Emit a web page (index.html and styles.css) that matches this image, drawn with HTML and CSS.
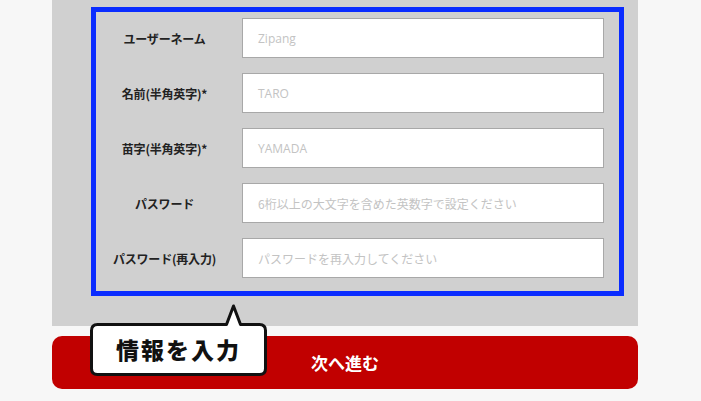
FILE: index.html
```html
<!DOCTYPE html>
<html lang="ja">
<head>
<meta charset="utf-8">
<title>会員登録</title>
<link rel="stylesheet" href="styles.css">
</head>
<body>
<div class="page">
  <section class="panel">
    <div class="frame">
      <div class="form-grid">
        <div class="label">ユーザーネーム</div>
        <div class="field"><span class="ph ph-latin">Zipang</span></div>
        <div class="label">名前(半角英字)*</div>
        <div class="field"><span class="ph ph-latin">TARO</span></div>
        <div class="label">苗字(半角英字)*</div>
        <div class="field"><span class="ph ph-latin">YAMADA</span></div>
        <div class="label">パスワード</div>
        <div class="field"><span class="ph">6桁以上の大文字を含めた英数字で設定ください</span></div>
        <div class="label">パスワード(再入力)</div>
        <div class="field"><span class="ph">パスワードを再入力してください</span></div>
      </div>
    </div>
  </section>
  <button class="next-btn" type="button">次へ進む</button>
  <div class="callout">
    <svg class="callout-shape" width="181" height="77" viewBox="0 0 181 77" aria-hidden="true">
      <path d="M9.5 23.5 H138.5 L145.5 5 L152.5 23.5 H171.5 Q177.5 23.5 177.5 29.5 V67.5 Q177.5 73.5 171.5 73.5 H9.5 Q3.5 73.5 3.5 67.5 V29.5 Q3.5 23.5 9.5 23.5 Z" fill="#ffffff" stroke="#111111" stroke-width="3" stroke-linejoin="round"/>
    </svg>
    <span class="callout-text">情報を入力</span>
  </div>
</div>
</body>
</html>
```
FILE: styles.css
```css
html, body {
  margin: 0;
  padding: 0;
}
body {
  background: #f7f7f7;
  font-family: "Noto Sans CJK JP", "Noto Sans", sans-serif;
  width: 701px;
  height: 401px;
  overflow: hidden;
}
.page {
  position: relative;
  width: 701px;
  height: 401px;
}
.panel {
  margin-left: 52px;
  width: 586px;
  height: 326px;
  background: #d0d0d0;
  padding: 7px 0 0 39px;
  box-sizing: border-box;
}
.frame {
  width: 533px;
  height: 289px;
  box-sizing: border-box;
  border: 5px solid #0a2cff;
  padding: 6px 15px 0 0;
}
.form-grid {
  display: grid;
  grid-template-columns: 137px 362px;
  grid-auto-rows: 40px;
  column-gap: 9px;
  row-gap: 15px;
}
.label {
  display: flex;
  align-items: center;
  justify-content: center;
  font-size: 12px;
  font-weight: 700;
  color: #222;
  white-space: nowrap;
  letter-spacing: -0.2px;
}
.field {
  background: #fff;
  border: 1px solid #a8a8a8;
  display: flex;
  align-items: center;
  padding-left: 15px;
  box-sizing: border-box;
}
.ph {
  font-size: 12px;
  color: #c3c3c3;
  white-space: nowrap;
  font-family: "Noto Sans CJK JP", sans-serif;
}
.ph-latin {
  font-family: "Open Sans", "Noto Sans CJK JP", sans-serif;
}
.next-btn {
  display: flex;
  align-items: center;
  justify-content: center;
  margin: 10px 0 0 52px;
  width: 586px;
  height: 53px;
  border: none;
  border-radius: 10px;
  background: #c10000;
  color: #fff;
  font-family: "Noto Sans CJK JP", sans-serif;
  font-weight: 700;
  font-size: 17px;
  padding: 0 0 0 0;
  text-indent: 0;
}
.callout {
  position: absolute;
  left: 88px;
  top: 301px;
  width: 181px;
  height: 77px;
}
.callout-shape {
  position: absolute;
  left: 0;
  top: 0;
}
.callout-text {
  position: absolute;
  left: 3px;
  top: 23px;
  width: 175px;
  height: 50px;
  display: flex;
  align-items: center;
  justify-content: center;
  font-size: 23px;
  font-weight: 900;
  letter-spacing: 2px;
  color: #111;
  line-height: 1;
}
```
